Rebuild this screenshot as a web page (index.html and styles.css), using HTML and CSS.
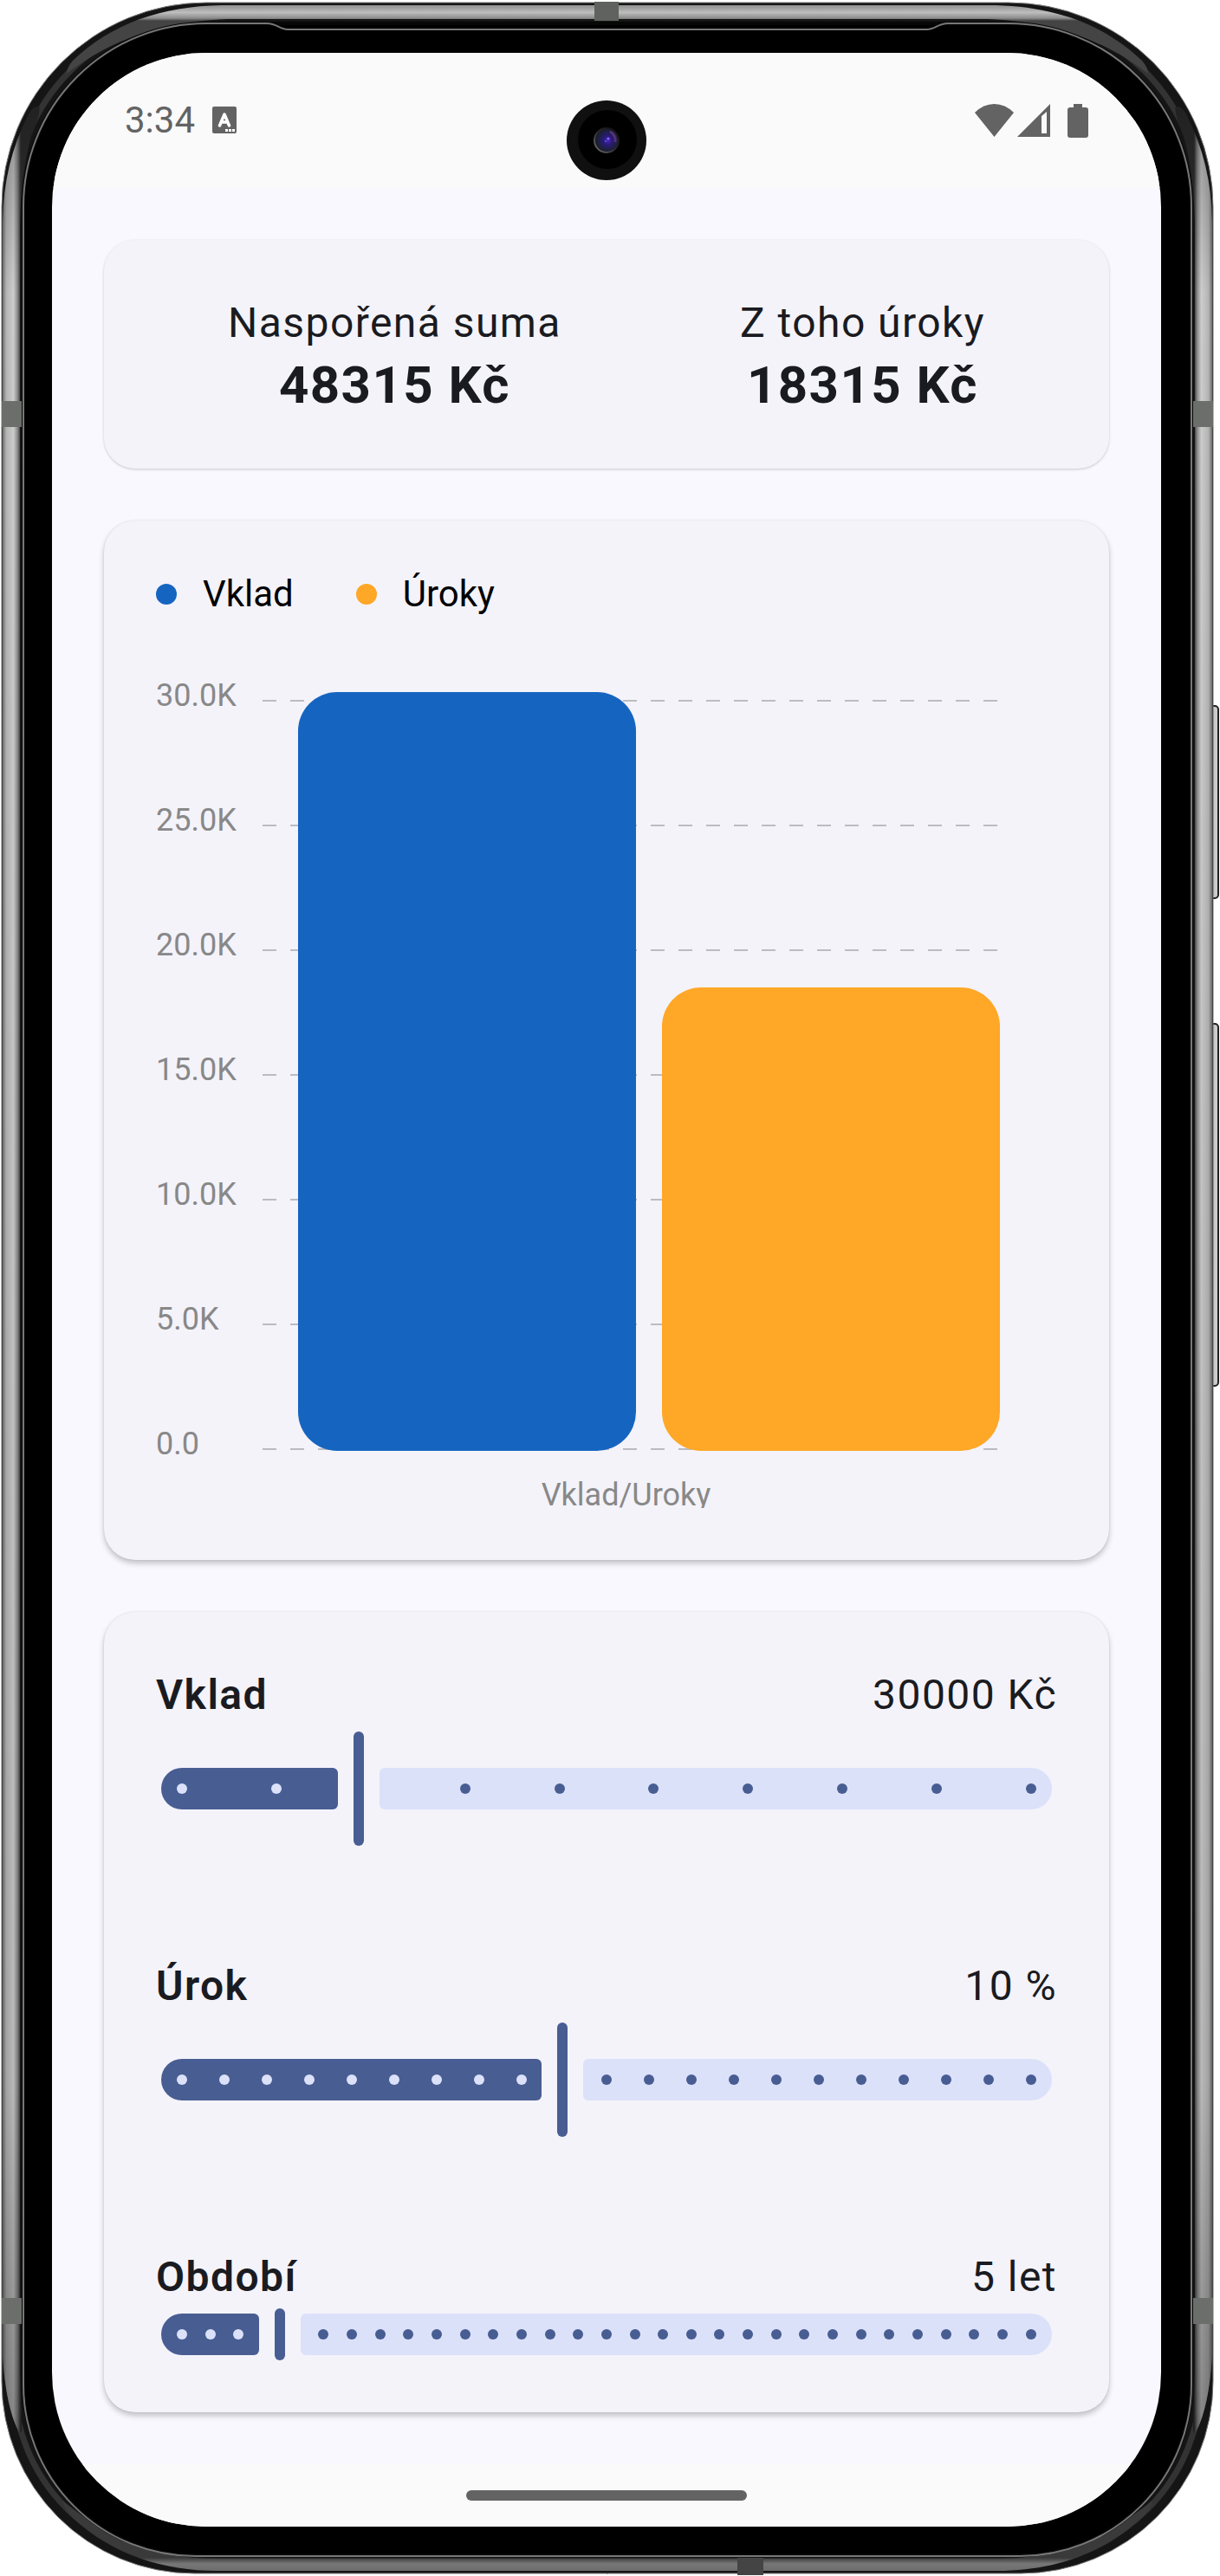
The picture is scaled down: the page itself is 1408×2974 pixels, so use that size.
FILE: index.html
```html
<!DOCTYPE html>
<html lang="cs">
<head>
<meta charset="utf-8">
<meta name="viewport" content="width=device-width, initial-scale=1">
<title>Spoření</title>
<link rel="stylesheet" href="styles.css">
</head>
<body>
<div class="phone">
  <svg class="frame" viewBox="0 0 1408 2974" preserveAspectRatio="none" aria-hidden="true">
    <defs>
      <linearGradient id="side" gradientUnits="userSpaceOnUse" x1="3" y1="0" x2="24" y2="0">
        <stop offset="0" stop-color="#6c6c6c"/><stop offset=".2" stop-color="#b4b4b4"/>
        <stop offset=".6" stop-color="#cdcdcd"/><stop offset=".82" stop-color="#8c8c8c"/><stop offset="1" stop-color="#303030"/>
      </linearGradient>
      <linearGradient id="shade" x1="0" y1="0" x2="0" y2="1">
        <stop offset="0" stop-color="#000" stop-opacity=".3"/><stop offset=".08" stop-color="#000" stop-opacity="0"/>
        <stop offset=".85" stop-color="#000" stop-opacity=".1"/><stop offset="1" stop-color="#000" stop-opacity=".35"/>
      </linearGradient>
      <linearGradient id="top" gradientUnits="userSpaceOnUse" x1="0" y1="5" x2="0" y2="24">
        <stop offset="0" stop-color="#8a8a8a"/><stop offset=".5" stop-color="#bdbdbd"/>
        <stop offset=".85" stop-color="#8a8a8a"/><stop offset="1" stop-color="#444"/>
      </linearGradient>
      <linearGradient id="bottom" gradientUnits="userSpaceOnUse" x1="0" y1="2953" x2="0" y2="2970">
        <stop offset="0" stop-color="#3a3a3a"/><stop offset=".4" stop-color="#777"/><stop offset="1" stop-color="#6a6a6a"/>
      </linearGradient>
      <linearGradient id="key" gradientUnits="userSpaceOnUse" x1="1398" y1="0" x2="1407" y2="0">
        <stop offset="0" stop-color="#444"/><stop offset=".3" stop-color="#c4c4c4"/>
        <stop offset=".7" stop-color="#d2d2d2"/><stop offset="1" stop-color="#555"/>
      </linearGradient>
      <g id="half">
        <path fill="#151515" stroke="#777" d="M702 3H238A236 236 0 0 0 2 239V2749A222 222 0 0 0 224 2971H702"/>
        <path fill="none" stroke="#333" stroke-width="7" d="M702 17H238A222 222 0 0 0 16 239V2749A208 208 0 0 0 224 2957H702"/>
        <path fill="url(#side)" d="M45 123Q38 122 33 132Q3 190 3 260V2720Q7 2780 22 2808Q26 2812 25 2796Q23 2760 23 2720V260Q24 200 36 157Q48 128 45 123Z"/>
        <path fill="url(#shade)" d="M45 123Q38 122 33 132Q3 190 3 260V2720Q7 2780 22 2808Q26 2812 25 2796Q23 2760 23 2720V260Q24 200 36 157Q48 128 45 123Z"/>
        <path fill="url(#top)" d="M77 85Q77 78 84 70C130 26 190 6 262 6H702V22H262C190 25 130 44 77 85Z"/>
        <path fill="url(#bottom)" d="M72 2887Q74 2898 86 2908C130 2950 190 2968 250 2968H702V2954H250C180 2954 126 2930 72 2887Z"/>
        <path fill="#000" stroke="#070707" stroke-width="4" d="M702 27H238A211 211 0 0 0 27 238V2752A198 198 0 0 0 225 2950H702"/>
        <path fill="none" stroke="#777" stroke-width="2" d="M702 34H332C322 34 320 27 308 27H238A211 211 0 0 0 27 238V2752A198 198 0 0 0 225 2951H702"/>
        <path fill="#6b6e6b" d="M2 463H25V493H2ZM2 2653H25V2683H2Z"/>
      </g>
    </defs>
    <g fill="url(#key)" stroke="#222" stroke-width="2">
      <rect x="1394" y="815" width="12" height="222" rx="4"/>
      <rect x="1394" y="1182" width="12" height="418" rx="4"/>
    </g>
    <use href="#half"/>
    <use href="#half" transform="translate(1402 0) scale(-1 1)"/>
    <path fill="#5f625f" d="M686 2H714V24H686Z"/>
    <path fill="#444" d="M851 2953H881V2973H851Z"/>
  </svg>

  <div class="screen">
    <header class="status">
      <div class="status-side">
        <time>3:34</time>
        <svg class="icon-a" viewBox="0 0 28 32" aria-hidden="true">
          <rect width="28" height="31" rx="2" fill="#636363"/>
          <path d="M8.500 22L14 9L19.500 22M10.500 18H17.500" fill="none" stroke="#fff" stroke-width="3.500" stroke-linecap="round" stroke-linejoin="round"/>
          <path d="M15 26h3v3h-3zM19 26h3v3h-3zM23 26h3v3h-3z" fill="#fff"/>
        </svg>
      </div>
      <svg class="camera" viewBox="0 0 92 92" aria-hidden="true">
        <defs>
          <radialGradient id="lens" cx=".55" cy=".5" r=".6">
            <stop offset="0" stop-color="#4a2cb8"/><stop offset=".3" stop-color="#2b1a78"/><stop offset=".7" stop-color="#1c2138"/><stop offset="1" stop-color="#141417"/>
          </radialGradient>
          <linearGradient id="rim" x1="0" y1="1" x2="1" y2="0">
            <stop offset="0" stop-color="#77716c"/><stop offset=".5" stop-color="#2a2a2c"/><stop offset="1" stop-color="#0b0b0b"/>
          </linearGradient>
        </defs>
        <circle cx="46" cy="46" r="46" fill="#101010"/>
        <circle cx="47" cy="45" r="34" fill="#000"/>
        <circle cx="46" cy="46" r="14" fill="url(#lens)" stroke="url(#rim)" stroke-width="2"/>
        <path d="M50 36a11 11 0 0 1 6 12" fill="none" stroke="#6b3a86" stroke-width="3" opacity=".7"/>
        <circle cx="48" cy="44" r="1.500" fill="#8a62ff"/><circle cx="45" cy="47" r="1" fill="#3d5cf0"/>
      </svg>
      <div class="status-side">
        <svg class="icon-wifi" viewBox="0 0 45 38" aria-hidden="true"><path fill="#636363" d="M0 10Q10 0 22.500 0T45 10L22.500 38Z"/></svg>
        <svg class="icon-signal" viewBox="0 0 38 38" aria-hidden="true"><path fill="#636363" fill-rule="evenodd" d="M0 38L38 0V38ZM28 14V34H34V9Z"/></svg>
        <svg class="icon-battery" viewBox="0 0 24 39" aria-hidden="true"><path fill="#636363" d="M7 0H17V4H21Q24 4 24 7V36Q24 39 21 39H3Q0 39 0 36V7Q0 4 3 4H7Z"/></svg>
      </div>
    </header>

    <main class="content">
      <section class="card summary">
        <div class="sum"><span>Naspořená suma</span><strong id="total">48315 Kč</strong></div>
        <div class="sum"><span>Z toho úroky</span><strong id="interest">18315 Kč</strong></div>
      </section>

      <section class="card raised">
        <ul class="legend">
          <li><i class="dot blue"></i>Vklad</li>
          <li><i class="dot orange"></i>Úroky</li>
        </ul>
        <div class="chart">
          <div class="axis">
            <span>30.0K</span><span>25.0K</span><span>20.0K</span><span>15.0K</span><span>10.0K</span><span>5.0K</span><span>0.0</span>
          </div>
          <div class="lines"><i></i><i></i><i></i><i></i><i></i><i></i><i></i></div>
          <div class="bars">
            <div class="bar blue" style="height:100%"></div>
            <div class="bar orange" style="height:61.05%"></div>
          </div>
          <div class="x-label">Vklad/Uroky</div>
        </div>
      </section>

      <section class="card raised controls">
        <div class="field">
          <div class="row"><label for="deposit">Vklad</label><output for="deposit">30000 Kč</output></div>
          <div class="slider"><div class="track"><i class="on"></i><i class="off"></i></div><div class="ticks"></div>
            <input type="range" id="deposit" min="10000" max="100000" step="10000" value="30000" data-unit="Kč"></div>
        </div>
        <div class="field">
          <div class="row"><label for="rate">Úrok</label><output for="rate">10 %</output></div>
          <div class="slider"><div class="track"><i class="on"></i><i class="off"></i></div><div class="ticks"></div>
            <input type="range" id="rate" min="1" max="21" step="1" value="10" data-unit="%"></div>
        </div>
        <div class="field">
          <div class="row"><label for="years">Období</label><output for="years">5 let</output></div>
          <div class="slider short"><div class="track"><i class="on"></i><i class="off"></i></div><div class="ticks"></div>
            <input type="range" id="years" min="1" max="31" step="1" value="5" data-unit="let"></div>
        </div>
      </section>
    </main>

    <footer class="nav"><i class="handle"></i></footer>
  </div>
</div>
<script src="app.js"></script>
</body>
</html>
```
FILE: styles.css
```css
:root {
  --ink: #1a1b21;
  --primary: #485d92;
  --track: #dce1fa;
  --blue: #1565c0;
  --orange: #ffa726;
  --system: #fafafa;
}

* { box-sizing: border-box; }

body {
  margin: 0;
  background: #fff;
  color: var(--ink);
  font-family: Roboto, "Noto Sans", sans-serif;
}

.phone {
  position: relative;
  padding: 61px 68px 57px 60px;
}

.frame {
  position: absolute;
  inset: 0;
  width: 100%;
  height: 100%;
}

.screen {
  position: relative;
  overflow: hidden;
  border-radius: 178px;
  background: #f9f8ff;
}

/* System bars */
.status {
  position: relative;
  display: flex;
  justify-content: space-between;
  align-items: center;
  height: 156px;
  padding: 0 84px;
  background: var(--system);
  color: #636363;
  font-size: 42px;
  line-height: 50px;
}

.status-side { display: flex; align-items: center; }
.status-side svg { display: block; }
.icon-a { width: 28px; height: 32px; margin-left: 20px; }
.icon-wifi { width: 45px; height: 38px; }
.icon-signal { width: 38px; height: 38px; margin: 0 20px 0 4px; }
.icon-battery { width: 24px; height: 39px; }

.camera {
  position: absolute;
  top: 55px;
  left: calc(50% - 46px);
  width: 92px;
  height: 92px;
}

.nav {
  display: flex;
  align-items: center;
  justify-content: center;
  height: 72px;
  background: var(--system);
}

.handle { width: 324px; height: 12px; border-radius: 6px; background: #636363; }

/* Cards */
.content { display: flex; flex-direction: column; gap: 60px; padding: 60px; }

.card {
  padding: 60px;
  border-radius: 36px;
  background: #f4f3fa;
  box-shadow: 0 1px 3px rgba(0, 0, 0, .2);
}

.raised { box-shadow: 0 4px 6px rgba(0, 0, 0, .22), 0 0 2px rgba(0, 0, 0, .12); }

.summary {
  display: flex;
  justify-content: space-around;
  padding: 60px 40px;
  font-size: 48px;
  line-height: 72px;
  letter-spacing: .03em;
}

.sum { display: flex; flex-direction: column; align-items: center; }
.sum strong { font-size: 60px; font-weight: 700; }

/* Chart */
.legend {
  display: flex;
  gap: 72px;
  margin: 0 0 71px;
  padding: 0;
  list-style: none;
  color: #000;
  font-size: 42px;
  line-height: 50px;
}

.legend li { display: flex; align-items: center; gap: 30px; }
.dot { width: 24px; height: 24px; border-radius: 50%; }
.blue { background: var(--blue); }
.orange { background: var(--orange); }

.chart {
  display: grid;
  grid-template-columns: 123px 1fr;
  padding-right: 66px;
  color: #888;
  font-size: 36px;
  line-height: 42px;
}

.axis { display: flex; flex-direction: column; gap: 102px; }

.lines, .bars { grid-row: 1; grid-column: 2; }

.lines {
  display: flex;
  flex-direction: column;
  justify-content: space-between;
  padding: 26px 0 14px;
}

.lines i {
  height: 2px;
  background: repeating-linear-gradient(90deg, #bcbcc0 0 16px, transparent 16px 32px);
}

.bars {
  display: flex;
  align-items: flex-end;
  gap: 30px;
  padding: 17px 0 13px 41px;
}

.bar { flex: 1; border-radius: 45px; }

.x-label {
  grid-column: 2;
  height: 36px;
  margin-top: 17px;
  padding-right: 12px;
  overflow: hidden;
  text-align: center;
}

/* Sliders */
.controls { display: flex; flex-direction: column; gap: 120px; }

.row {
  display: flex;
  justify-content: space-between;
  font-size: 48px;
  line-height: 72px;
  letter-spacing: .03em;
}

.row label { font-weight: 600; }

.slider {
  --pos: 0;
  display: grid;
  align-items: center;
  height: 144px;
}

.slider > * { grid-area: 1 / 1; }
.short { height: 60px; }

.track { display: flex; gap: 48px; height: 48px; margin: 0 6px; }
.on { width: calc(100% * var(--pos) - 24px); border-radius: 24px 6px 6px 24px; background: var(--primary); }
.off { flex: 1; border-radius: 6px 24px 24px 6px; background: var(--track); }

.ticks { display: flex; justify-content: space-between; margin: 0 24px; }
.ticks i { width: 12px; height: 12px; border-radius: 50%; background: var(--primary); }
.ticks .lit { background: var(--track); }
.ticks .gone { visibility: hidden; }

.slider input {
  width: 100%;
  height: 132px;
  margin: 0;
  appearance: none;
  background: none;
}

.short input { height: 60px; }

.slider input::-webkit-slider-thumb {
  appearance: none;
  width: 12px;
  height: 132px;
  border-radius: 6px;
  background: var(--primary);
}

.short input::-webkit-slider-thumb { height: 60px; }
```
FILE: app.js
```js
const inputs = [...document.querySelectorAll('.slider input')];

function drawSlider(input) {
  const slider = input.parentElement;
  const ticks = slider.querySelector('.ticks');
  const steps = (input.max - input.min) / input.step;
  const pos = (input.value - input.min) / (input.max - input.min);
  slider.style.setProperty('--pos', pos);
  ticks.replaceChildren();
  const width = slider.clientWidth - 12;
  for (let k = 0; k <= steps; k++) {
    const tick = document.createElement('i');
    const distance = 24 + (width - 48) * k / steps - width * pos;
    if (Math.abs(distance) < 24) tick.className = 'gone';
    else if (distance < 0) tick.className = 'lit';
    ticks.append(tick);
  }
  document.querySelector(`output[for="${input.id}"]`).value = `${input.value} ${input.dataset.unit}`;
}

function update() {
  inputs.forEach(drawSlider);
  const [deposit, rate, years] = inputs.map(i => Number(i.value));
  const total = deposit * (1 + rate / 100) ** years;
  document.getElementById('total').textContent = `${Math.floor(total)} Kč`;
  document.getElementById('interest').textContent = `${Math.floor(total - deposit)} Kč`;
}

inputs.forEach(i => i.addEventListener('input', update));
update();
```
